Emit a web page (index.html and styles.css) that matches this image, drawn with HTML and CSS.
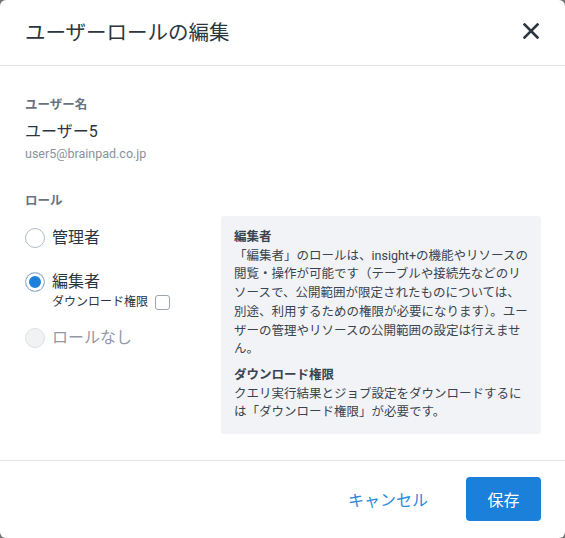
FILE: index.html
```html
<!DOCTYPE html>
<html lang="ja">
    <head>
        <title>ユーザーロールの編集</title>
        <meta charset="utf-8">
        <link rel="stylesheet" href="styles.css">
    </head>
    <body>
        <div class="dialog">
            <div class="header">
                <h1 class="title">ユーザーロールの編集</h1>
                <button class="close" aria-label="閉じる">
                    <svg width="16" height="16" viewBox="0 0 16 16"><path d="M1.5 1.5 L14.5 14.5 M14.5 1.5 L1.5 14.5" stroke="#2b3640" stroke-width="2.6" stroke-linecap="square"/></svg>
                </button>
            </div>

            <div class="content">
                <div class="label">ユーザー名</div>
                <div class="name">ユーザー5</div>
                <div class="email">user5@brainpad.co.jp</div>

                <div class="label role-label">ロール</div>
                <div class="roles">
                    <div class="options">
                        <label class="option">
                            <input type="radio" name="role" class="radio">
                            <span class="option-text">管理者</span>
                        </label>
                        <div class="option option-editor">
                            <input type="radio" name="role" class="radio" checked>
                            <div>
                                <div class="option-text">編集者</div>
                                <label class="sub">ダウンロード権限 <input type="checkbox" class="check"></label>
                            </div>
                        </div>
                        <label class="option option-none">
                            <input type="radio" name="role" class="radio" disabled>
                            <span class="option-text">ロールなし</span>
                        </label>
                    </div>
                    <div class="info">
                        <div class="info-title">編集者</div>
                        <p>「編集者」のロールは、insight+の機能やリソースの閲覧・操作が可能です（テーブルや接続先などのリソースで、公開範囲が限定されたものについては、別途、利用するための権限が必要になります）。ユーザーの管理やリソースの公開範囲の設定は行えません。</p>
                        <div class="info-title info-second">ダウンロード権限</div>
                        <p>クエリ実行結果とジョブ設定をダウンロードするには「ダウンロード権限」が必要です。</p>
                    </div>
                </div>
            </div>

            <div class="footer">
                <button class="btn-cancel">キャンセル</button>
                <button class="btn-save">保存</button>
            </div>
        </div>
    </body>
</html>
```

FILE: styles.css
```css
body {
    margin: 0;
    background: #767676;
    font-family: Roboto, "Noto Sans CJK JP", sans-serif;
    color: #263238;
}
.dialog {
    width: 565px;
    height: 538px;
    background: #fff;
    border-radius: 6px;
    display: flex;
    flex-direction: column;
}
.header {
    height: 66px;
    padding: 0 26px 4px 25px;
    box-sizing: border-box;
    display: flex;
    align-items: center;
    justify-content: space-between;
    border-bottom: 1px solid #e1e4e8;
}
.title {
    margin: 0;
    font-size: 20.5px;
    font-weight: normal;
    color: #2b3640;
}
.close {
    border: 0;
    background: none;
    padding: 0;
    width: 16px;
    height: 16px;
    cursor: pointer;
}
.content {
    flex: 1;
    padding: 29px 24px 0 25px;
}
.label {
    font-size: 12.5px;
    line-height: 20px;
    font-weight: bold;
    color: #68737f;
}
.name {
    margin-top: 5px;
    font-size: 16px;
    line-height: 24px;
    color: #2b3640;
}
.name-num {
    font-family: "Noto Sans CJK JP", sans-serif;
}
.email {
    font-size: 12.5px;
    line-height: 20px;
    color: #87929d;
}
.role-label {
    margin-top: 27px;
}
.roles {
    margin-top: 5px;
    display: flex;
    justify-content: space-between;
}
.options {
    padding-top: 12px;
}
.option {
    display: flex;
    align-items: flex-start;
    gap: 7px;
}
.option-editor {
    margin-top: 24px;
}
.option-none {
    margin-top: 20px;
}
.option-text {
    font-size: 16px;
    line-height: 20px;
    color: #2b3640;
}
.option-none .option-text {
    color: #909aa5;
}
.radio {
    appearance: none;
    margin: 0;
    width: 20px;
    height: 20px;
    border: 1px solid #b3bcc5;
    border-radius: 50%;
    background: #fff;
    flex: none;
}
.radio:checked {
    background: #1a80da;
    box-shadow: inset 0 0 0 3px #fff;
}
.radio:disabled {
    background: #f1f2f4;
    border-color: #dde1e5;
}
.sub {
    display: flex;
    align-items: center;
    gap: 7px;
    height: 16px;
    font-size: 12px;
    color: #2b3640;
}
.check {
    appearance: none;
    margin: 4px 0 0;
    width: 15px;
    height: 15px;
    border: 1px solid #9aa6b2;
    border-radius: 3px;
    background: #fff;
}
.info {
    width: 320px;
    box-sizing: border-box;
    padding: 12px 12px 12px 13px;
    background: #f1f3f7;
    border-radius: 3px;
    font-size: 12.5px;
    line-height: 18.7px;
    color: #3a444e;
}
.info p {
    margin: 0;
}
.info-title {
    font-weight: bold;
}
.info-second {
    margin-top: 7px;
}
.footer {
    height: 78px;
    border-top: 1px solid #e1e4e8;
    box-sizing: border-box;
    padding: 0 24px 1px;
    display: flex;
    align-items: center;
    justify-content: flex-end;
    gap: 18px;
}
.btn-cancel {
    border: 0;
    background: none;
    font: 16px Roboto, "Noto Sans CJK JP", sans-serif;
    color: #2a87d8;
    padding: 12px 20px;
    cursor: pointer;
}
.btn-save {
    border: 0;
    width: 75px;
    height: 44px;
    border-radius: 4px;
    background: #1a80da;
    color: #fff;
    font: 16px Roboto, "Noto Sans CJK JP", sans-serif;
    cursor: pointer;
}
```
